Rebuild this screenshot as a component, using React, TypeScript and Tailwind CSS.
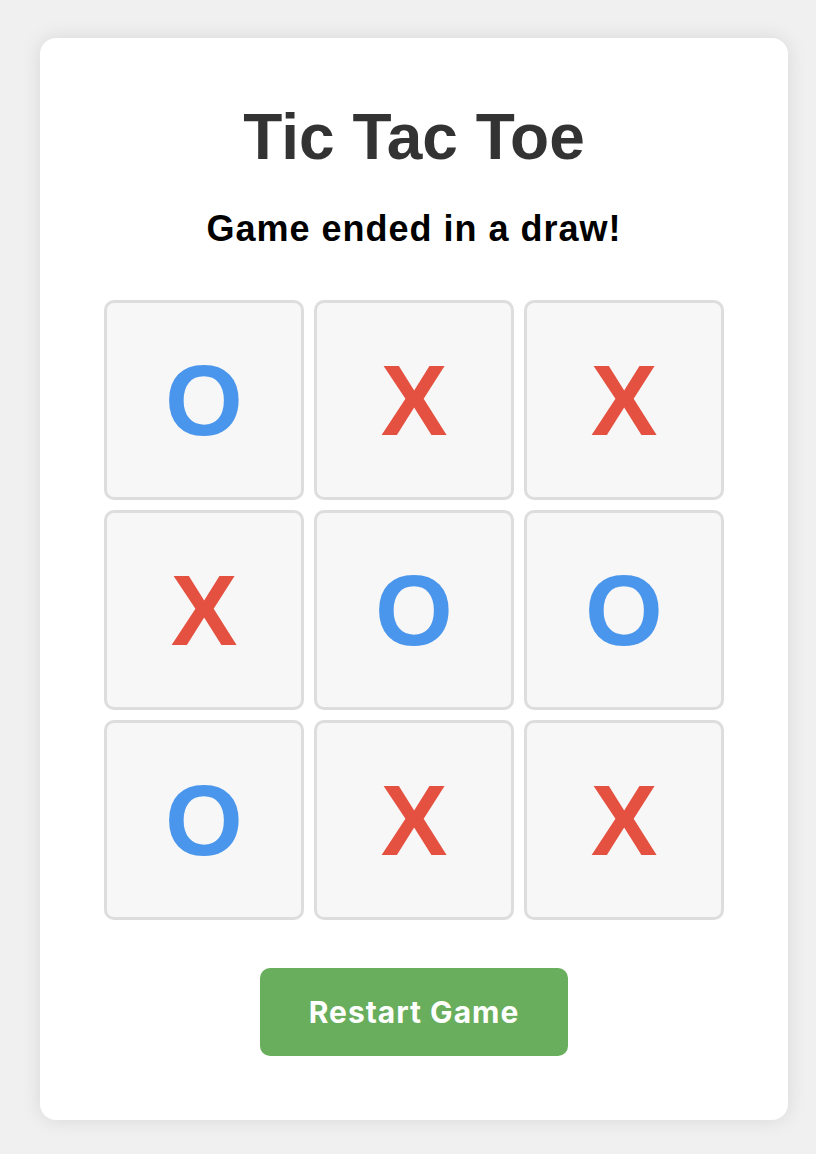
import React from "react";

const board = ["O", "X", "X", "X", "O", "O", "O", "X", "X"];

export default function App() {
  return (
    <div className="min-h-[1154px] w-[816px] bg-[#f0f0f0] pt-[38px] pl-[40px]">
      <div className="flex w-[748px] flex-col items-center rounded-[16px] bg-white pt-[62px] pb-[64px] shadow-[0_0_20px_rgba(0,0,0,0.1)]">
        <h1 className="text-[64px] font-bold leading-[74px] text-[#333333] [font-family:'Liberation_Sans',Arial,sans-serif]">
          Tic Tac Toe
        </h1>
        <p className="mt-[36px] text-[36px] font-bold leading-[37px] tracking-[1px] text-black [font-family:'Liberation_Sans',Arial,sans-serif]">
          Game ended in a draw!
        </p>
        <div className="mt-[53px] grid grid-cols-[repeat(3,200px)] grid-rows-[repeat(3,200px)] gap-[10px]">
          {board.map((v, i) => (
            <div
              key={i}
              className="flex items-center justify-center rounded-[10px] border-[3px] border-[#dddddd] bg-[#f7f7f7]"
            >
              <span
                className={
                  "text-[100px] font-bold leading-none [font-family:'Liberation_Sans',Arial,sans-serif] " +
                  (v === "X" ? "text-[#e55140]" : "text-[#4a96ec]")
                }
              >
                {v}
              </span>
            </div>
          ))}
        </div>
        <button className="mt-[48px] flex h-[88px] w-[308px] items-center justify-center rounded-[10px] bg-[#68ae5c] text-[30px] font-bold tracking-[1px] text-white [font-family:Inter,sans-serif]">
          Restart Game
        </button>
      </div>
    </div>
  );
}
